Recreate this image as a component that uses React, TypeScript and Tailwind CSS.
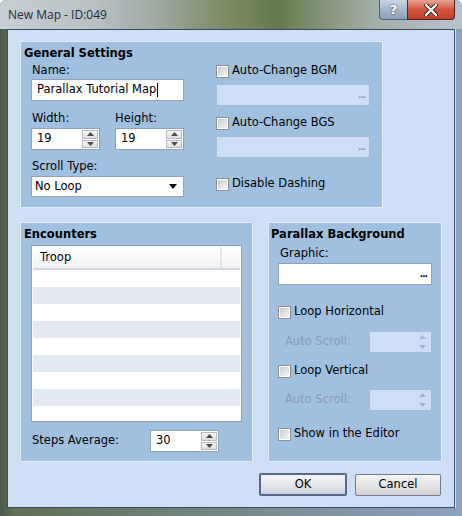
import React from 'react'

const font = { fontFamily: '"DejaVu Sans", Verdana, sans-serif' }

function Checkbox({ label }: { label: string }) {
  return (
    <div className="flex h-[16px] items-center gap-[3px]">
      <div className="h-[13px] w-[13px] border border-[#8e8f8f] bg-white p-[1px]">
        <div className="h-full w-full bg-gradient-to-br from-[#cbcbcb] to-[#f6f6f6]" />
      </div>
      <span className="text-[#000]">{label}</span>
    </div>
  )
}

function Spin({ value, disabled }: { value?: string; disabled?: boolean }) {
  return (
    <div
      className={`flex h-[22px] items-center border ${
        disabled ? 'border-[#a9bbd0] bg-[#cddff4]' : 'border-[#8fa3b8] bg-white'
      }`}
    >
      <span className="flex-1 pl-[5px]">{value}</span>
      <div className="flex h-full w-[17px] flex-col gap-[1px] py-[1px] pr-[1px]">
        {[0, 1].map((i) => (
          <div
            key={i}
            className={`flex flex-1 items-center justify-center ${
              disabled ? '' : 'border border-[#b6bcc6] bg-gradient-to-b from-[#f7f7f7] to-[#dedede]'
            }`}
          >
            <svg width="7" height="4" viewBox="0 0 7 4">
              <path
                d={i === 0 ? 'M0 4 L3.5 0 L7 4 Z' : 'M0 0 L3.5 4 L7 0 Z'}
                fill={disabled ? '#a6b3c6' : '#4a4a4a'}
              />
            </svg>
          </div>
        ))}
      </div>
    </div>
  )
}

function FileField({ disabled }: { disabled?: boolean }) {
  return (
    <div
      className={`flex h-[22px] items-center justify-end border pr-[4px] ${
        disabled ? 'border-[#a9bbd0] bg-[#cddff4] text-[#8d99b8]' : 'border-[#8fa3b8] bg-white text-black'
      }`}
    >
      <span className="text-[9px] font-bold leading-none tracking-[-1px]">...</span>
    </div>
  )
}

export default function App() {
  const rows = Array.from({ length: 9 })
  return (
    <div
      className="relative h-[516px] w-[462px] overflow-hidden rounded-t-[6px] bg-[linear-gradient(90deg,#4b5a4a_0%,#5f6f52_3%,#8ba2bf_100%)] text-[11.5px] text-black"
      style={font}
    >
      {/* title bar */}
      <div className="flex h-[29px] bg-[linear-gradient(90deg,#c6cfd4_0%,#b8c2c4_20%,#a4aca8_32%,#7e8d68_48%,#647a4c_60%,#8a9a80_72%,#a3b0ab_82%,#b6c3cf_100%)]">
        <div
          className="flex-1 pl-[8px] pt-[6px] text-[12px] text-[#1e2838]"
          style={{ fontFamily: '"Open Sans", "Noto Sans", sans-serif' }}
        >
          New Map - ID:049
        </div>
        <div className="mr-[7px] flex h-[20px]">
          <div className="flex w-[28px] items-center justify-center rounded-bl-[4px] border border-r-0 border-t-0 border-[#4b5e7a] bg-gradient-to-b from-[#c9d6e6] via-[#a5b6cb] to-[#8aa0bb] text-[13px] font-bold text-white [text-shadow:0_0_2px_#22324a]">
            ?
          </div>
          <div className="flex w-[48px] items-center justify-center rounded-br-[4px] border border-t-0 border-[#5a2020] bg-gradient-to-b from-[#e8a193] via-[#d2563f] to-[#c0412b] text-white">
            <svg width="14" height="12" viewBox="0 0 14 12">
              <path d="M2 1 L12 11 M12 1 L2 11" stroke="#3a1a14" strokeWidth="4" strokeLinecap="round" />
              <path d="M2 1 L12 11 M12 1 L2 11" stroke="#ffffff" strokeWidth="2.4" strokeLinecap="round" />
            </svg>
          </div>
        </div>
      </div>

      {/* client area */}
      <div className="mx-[7px] h-[479px] w-[448px] border border-[#3c4c66] bg-[#cddff4] shadow-[1px_0_0_#d8e4f2]">
        <div className="pl-[12px] pt-[11px]">
          {/* General Settings */}
          <div className="h-[167px] w-[363px] border border-[#e2ecf8] bg-[#a1c0df] pt-[4px]">
            <div className="h-[14px] pl-[3px] font-bold leading-[14px]">General Settings</div>
            <div className="flex">
              <div className="ml-[10px] w-[153px]">
                <div className="mt-[2px] h-[16px] pl-[1px] leading-[16px]">Name:</div>
                <div className="mt-[1px] flex h-[22px] items-center border border-[#8fa3b8] bg-white pl-[5px]">
                  Parallax Tutorial Map<span className="ml-[1px] inline-block h-[14px] w-[1px] bg-black" />
                </div>
                <div className="mt-[9px] flex">
                  <div className="w-[84px]">
                    <div className="h-[16px] pl-[1px] leading-[16px]">Width:</div>
                    <div className="mt-[2px] w-[69px]">
                      <Spin value="19" />
                    </div>
                  </div>
                  <div className="w-[69px]">
                    <div className="h-[16px] leading-[16px]">Height:</div>
                    <div className="mt-[2px]">
                      <Spin value="19" />
                    </div>
                  </div>
                </div>
                <div className="mt-[8px] h-[16px] pl-[1px] leading-[16px]">Scroll Type:</div>
                <div className="mt-[2px] flex h-[21px] items-center justify-between border border-[#8fa3b8] bg-white pl-[3px] pr-[6px]">
                  <span>No Loop</span>
                  <svg width="8" height="5" viewBox="0 0 8 5">
                    <path d="M0 0 L8 0 L4 5 Z" fill="#000" />
                  </svg>
                </div>
              </div>
              <div className="ml-[32px] w-[154px]">
                <div className="mt-[3px]">
                  <Checkbox label="Auto-Change BGM" />
                </div>
                <div className="mt-[5px]">
                  <FileField disabled />
                </div>
                <div className="mt-[9px]">
                  <Checkbox label="Auto-Change BGS" />
                </div>
                <div className="mt-[5px]">
                  <FileField disabled />
                </div>
                <div className="mt-[18px]">
                  <Checkbox label="Disable Dashing" />
                </div>
              </div>
            </div>
          </div>

          <div className="mt-[14px] flex gap-[15px]">
            {/* Encounters */}
            <div className="h-[240px] w-[233px] border border-[#e2ecf8] bg-[#a1c0df] pt-[4px]">
              <div className="h-[14px] pl-[3px] font-bold leading-[14px]">Encounters</div>
              <div className="ml-[10px] mt-[4px] h-[177px] w-[211px] overflow-hidden border border-[#8fa3b8] bg-white p-[1px]">
                <div className="flex h-[23px] border-b-2 border-[#d5dae0] bg-gradient-to-b from-white to-[#f1f2f4]">
                  <div className="flex w-[189px] items-center border-r-2 border-[#e3e6ea] pl-[7px]">Troop</div>
                </div>
                {rows.map((_, i) => (
                  <div key={i} className={`h-[17px] ${i % 2 === 1 ? 'bg-[#e3eaf2]' : 'bg-white'}`} />
                ))}
              </div>
              <div className="ml-[10px] mt-[8px] flex items-center">
                <span className="w-[119px] pl-[1px]">Steps Average:</span>
                <div className="w-[69px]">
                  <Spin value="30" />
                </div>
              </div>
            </div>

            {/* Parallax Background */}
            <div className="h-[240px] w-[174px] border border-[#e2ecf8] bg-[#a1c0df] pt-[4px]">
              <div className="h-[14px] pl-[2px] font-bold leading-[14px]">Parallax Background</div>
              <div className="px-[9px]">
                <div className="mt-[4px] h-[16px] pl-[2px] leading-[16px]">Graphic:</div>
                <div className="mt-[2px]">
                  <FileField />
                </div>
                <div className="mt-[19px]">
                  <Checkbox label="Loop Horizontal" />
                </div>
                <div className="mt-[11px] flex items-center">
                  <span className="flex-1 pl-[7px] text-[#8d99b8]">Auto Scroll:</span>
                  <div className="w-[63px]">
                    <Spin disabled />
                  </div>
                </div>
                <div className="mt-[10px]">
                  <Checkbox label="Loop Vertical" />
                </div>
                <div className="mt-[10px] flex items-center">
                  <span className="flex-1 pl-[7px] text-[#8d99b8]">Auto Scroll:</span>
                  <div className="w-[63px]">
                    <Spin disabled />
                  </div>
                </div>
                <div className="mt-[15px]">
                  <Checkbox label="Show in the Editor" />
                </div>
              </div>
            </div>
          </div>

          {/* buttons */}
          <div className="mt-[11px] flex justify-end gap-[8px] pr-[13px]">
            <button className="h-[23px] w-[88px] rounded-[2px] border-2 border-[#56698a] bg-gradient-to-b from-[#f2f4f7] via-[#e4e8ee] to-[#cdd3dc] text-[11.5px]">
              OK
            </button>
            <button className="mt-[1px] h-[22px] w-[86px] rounded-[2px] border border-[#707b8c] bg-gradient-to-b from-[#f2f2f2] via-[#e6e6e6] to-[#d0d0d0] text-[11.5px]">
              Cancel
            </button>
          </div>
        </div>
      </div>
    </div>
  )
}
